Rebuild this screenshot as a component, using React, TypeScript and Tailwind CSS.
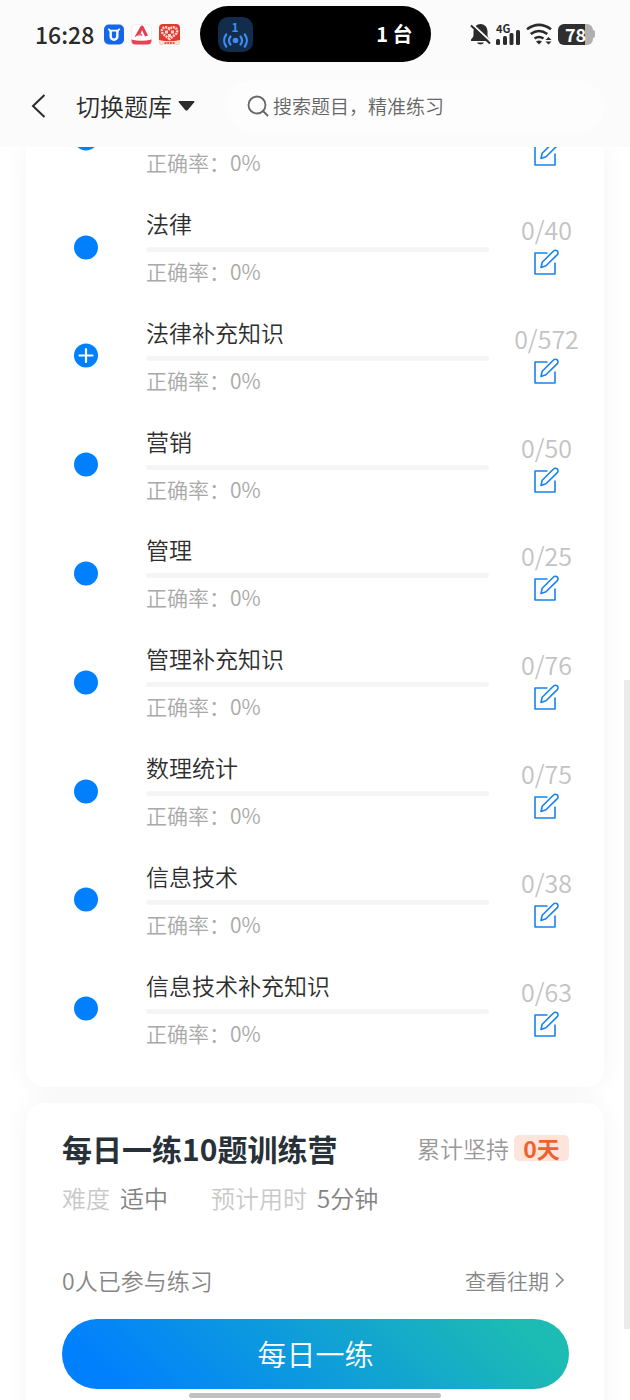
type Subject = { id: number; name?: string; total?: number; expandable?: boolean };

const subjects: Subject[] = [
  { id: 1 },
  { id: 2, name: "法律", total: 40 },
  { id: 3, name: "法律补充知识", total: 572, expandable: true },
  { id: 4, name: "营销", total: 50 },
  { id: 5, name: "管理", total: 25 },
  { id: 6, name: "管理补充知识", total: 76 },
  { id: 7, name: "数理统计", total: 75 },
  { id: 8, name: "信息技术", total: 38 },
  { id: 9, name: "信息技术补充知识", total: 63 },
];

function StatusBar() {
  return (
    <div className="flex h-[68px] items-center pl-[35px] pr-[35px]">
      <div className="flex flex-1 items-center gap-[10px]">
        <span className="text-[23px] font-medium leading-none text-[#2b2b2b]">16:28</span>
        <div className="flex gap-[7px]">
          <svg width="20" height="21" viewBox="0 0 21 21">
            <rect width="21" height="21" rx="5" fill="#1467ea" />
            <path d="M4.500 4.500 6.500 6.500h8L16.500 4.500" fill="none" stroke="#fff" strokeWidth="1.800" />
            <path d="M7 6v6.500a3.500 3.500 0 0 0 7 0V6" fill="none" stroke="#fff" strokeWidth="2.500" />
          </svg>
          <svg width="21" height="21" viewBox="0 0 21 21">
            <rect x=".5" y=".5" width="20" height="20" rx="4" fill="#fff" stroke="#f1eeee" />
            <path d="M3.500 13 9.500 2.500q1.500-2 3 0l4.500 9-3 1-3-6.500-1.500 4z" fill="#e63c50" />
            <path d="M3.500 13.500C6 9.500 9 9 11.500 10.500l-.5 1.500C8 11 6 11.500 3.500 13.500z" fill="#f0606f" />
            <path d="M.5 15.500Q10.500 18 20.500 15.500V17a4 4 0 0 1-4 3.500h-12a4 4 0 0 1-4-3.500z" fill="#ea4157" />
          </svg>
          <svg width="21" height="21" viewBox="0 0 21 21">
            <rect width="21" height="21" rx="4" fill="#e33a30" />
            <path
              d="M10.500 15 4 10C.5 5 6 .8 10.500 5c4.500-4.200 10 0 6.500 5z"
              fill="none"
              stroke="#fbd9d0"
              strokeWidth="2.500"
              strokeDasharray="2 .8"
            />
            <path d="M6 6.500h3v3H6zM12 6.500h3v3h-3zM9 10h3v3H9z" fill="#fbd9d0" />
            <path d="M0 16q10.500 2.500 21 0v1a4 4 0 0 1-4 4H4a4 4 0 0 1-4-4z" fill="#fce3d6" />
            <path d="M5.500 19h10" stroke="#e2574a" strokeWidth="2" strokeDasharray="2 .7" />
          </svg>
        </div>
      </div>

      <div className="flex h-14 w-[231px] items-center justify-between rounded-full bg-black pl-[18px] pr-[18px] text-white">
        <div className="flex h-[35px] w-[35px] flex-col items-center rounded-[10px] bg-[#122c4b] pt-1">
          <span className="text-[12px] font-bold leading-[12px] text-[#3e8cf4]">1</span>
          <svg width="27" height="16" viewBox="0 0 27 16" fill="none" stroke="#3e8cf4" strokeWidth="2.200" strokeLinecap="round">
            <circle cx="13.500" cy="7.500" r="2.800" fill="#3e8cf4" stroke="none" />
            <path d="M8.500 3.500a6.500 6.500 0 0 0 0 8M18.500 3.500a6.500 6.500 0 0 1 0 8M4.200 1.500a10 10 0 0 0 0 12M22.800 1.500a10 10 0 0 1 0 12" />
          </svg>
        </div>
        <span className="text-[20px] font-bold leading-none">1 台</span>
      </div>

      <div className="flex flex-1 items-center justify-end gap-[5px] text-[#2b2b2b]">
        <svg width="21" height="22" viewBox="0 0 21 22">
          <path
            d="M10.500 1a7 7 0 0 1 7 7v4.500q0 1.500 2.500 4V18H1v-1.500q2.500-2.500 2.500-4V8a7 7 0 0 1 7-7z"
            fill="currentColor"
          />
          <path d="M7 19.500h7q-1 2-3.500 2t-3.500-2z" fill="currentColor" />
          <path d="M2 1 21 18.500" stroke="#fbfbfb" strokeWidth="2" />
          <path d="M1 2.500 20 20.500" stroke="currentColor" strokeWidth="2" />
        </svg>
        <div className="relative">
          <svg width="25" height="22" viewBox="0 0 25 22" fill="currentColor">
            <rect x="0" y="16" width="4" height="6" rx="1.500" />
            <rect x="7" y="13" width="4" height="9" rx="1.500" />
            <rect x="13.500" y="10" width="4" height="12" rx="1.500" />
            <rect x="20" y="7" width="4" height="15" rx="1.500" />
          </svg>
          <span className="absolute left-0 top-0 text-[11px] font-bold leading-[10px]">4G</span>
        </div>
        <svg width="27" height="22" viewBox="0 0 27 22">
          <path
            d="M1 6.200q12-8.500 24 0M4.700 11q8.300-6 16.600 0M8.500 15.500q4.500-3 9 0"
            fill="none"
            stroke="currentColor"
            strokeWidth="2.600"
          />
          <path d="M10 18.500q3-2 6 0l-3 3z" fill="currentColor" />
          <path d="m19.500 17 3-3 3 3zM19.500 18.500l3 3 3-3z" fill="currentColor" />
        </svg>
        <div className="flex items-center">
          <div className="flex h-[21px] w-[35px] items-center justify-center rounded-[6px] bg-[linear-gradient(90deg,#2f2f2f_77%,#b0b0b0_77%)] text-[18px] font-bold leading-none text-white">
            78
          </div>
          <div className="h-2 w-[2px] rounded-r bg-[#b0b0b0]" />
        </div>
      </div>
    </div>
  );
}

function EditIcon() {
  return (
    <svg width="27" height="27" viewBox="0 0 27 27" fill="none" stroke="#1683ee" strokeWidth="1.600" strokeLinejoin="round">
      <path d="M14.500 4H2v21h20V13.500" />
      <path d="m8 18.500 1.200-5.200L20.500 2a2.500 2.500 0 0 1 3.800 3.600L13 16.800z" />
    </svg>
  );
}

function SubjectRow({ name, total, expandable }: Subject) {
  return (
    <li className="flex items-center">
      <div className="flex w-[120px] shrink-0 justify-center">
        <svg width="25" height="25" viewBox="0 0 25 25">
          <circle cx="12" cy="12.500" r="12" fill="#0180fe" />
          {expandable && <path d="M12 6v13M5.500 12.500h13" stroke="#fff" strokeWidth="2.200" strokeLinecap="round" />}
        </svg>
      </div>
      <div className="min-w-0 flex-1">
        <h3 className="h-8 text-[23px] leading-8 text-[#2e2e2e]">{name}</h3>
        <div className="mt-2 h-[5px] rounded-full bg-[#f5f5f5]" />
        <p className="mt-[3px] text-[21px] leading-8 text-[#a9a9a9]">正确率：0%</p>
      </div>
      <div className="flex w-[115px] shrink-0 flex-col items-center gap-1 pb-[5px]">
        <span className="h-8 text-[25px] leading-8 text-[#c3c3c3]">{total && `0/${total}`}</span>
        <button aria-label={`练习${name ?? ""}`}>
          <EditIcon />
        </button>
      </div>
    </li>
  );
}

export default function App() {
  return (
    <div className="relative flex h-screen flex-col overflow-hidden bg-white font-['Noto_Sans_CJK_SC',sans-serif] font-[350]">
      <header className="shrink-0 bg-[#fbfbfb] pb-[15px]">
        <StatusBar />
        <div className="flex items-center pl-[31px] pr-[26px] pt-3">
          <button aria-label="返回">
            <svg width="15" height="24" viewBox="0 0 15 24" fill="none" stroke="#2b2b2b" strokeWidth="2">
              <path d="M13.500 1 2 12l11.500 11" />
            </svg>
          </button>
          <button className="ml-[30px] flex items-center gap-[6px] text-[24px] leading-8 text-[#2b2b2b]">
            切换题库
            <svg width="17" height="10" viewBox="0 0 17 10">
              <path d="M1.500 0h14q1.500 0 .7 1.200L9.800 9q-1.300 1-2.600 0L.8 1.200Q0 0 1.500 0z" fill="currentColor" />
            </svg>
          </button>
          <label className="ml-8 flex h-[52px] min-w-0 flex-1 items-center gap-1 rounded-full bg-[#fdfdfd] pl-5">
            <svg width="22" height="22" viewBox="0 0 22 22" fill="none" stroke="#666" strokeWidth="1.800">
              <circle cx="10" cy="10" r="8.500" />
              <path d="m16 16 4.500 4.500" strokeLinecap="round" />
            </svg>
            <input
              type="search"
              aria-label="搜索题目"
              placeholder="搜索题目，精准练习"
              className="min-w-0 flex-1 bg-transparent text-[19px] leading-7 outline-none placeholder:text-[#666]"
            />
          </label>
        </div>
      </header>

      <main className="flex min-h-0 flex-1 flex-col gap-4 overflow-hidden px-[26px]">
        <section className="shrink-0 rounded-b-[18px] bg-white pb-6 shadow-[0_0_24px_rgba(0,0,0,0.05)]">
          <ul className="-mt-[63px] grid h-[979px] auto-rows-fr">
            {subjects.map((subject) => (
              <SubjectRow key={subject.id} {...subject} />
            ))}
          </ul>
        </section>

        <section className="shrink-0 rounded-t-[18px] bg-white pb-20 pl-9 pr-[35px] pt-[23px] shadow-[0_0_24px_rgba(0,0,0,0.05)]">
          <div className="flex items-center justify-between">
            <h2 className="text-[30px] font-bold leading-[44px] text-[#283138]">每日一练10题训练营</h2>
            <p className="flex items-center gap-[5px] text-[23px] leading-8 text-[#999]">
              累计坚持
              <span className="flex h-[26px] w-[55px] items-center justify-center rounded-[5px] bg-[#fee5db] font-bold text-[#f0622d]">
                0天
              </span>
            </p>
          </div>
          <div className="mt-3 flex gap-[43px] text-[24px] leading-8 text-[#828282]">
            <p className="flex gap-[10px]">
              <span className="text-[#c9c9c9]">难度</span>适中
            </p>
            <p className="flex gap-[10px]">
              <span className="text-[#c9c9c9]">预计用时</span>5分钟
            </p>
          </div>
          <div className="mt-[50px] flex items-center justify-between leading-8 text-[#868686]">
            <p className="text-[23px]">0人已参与练习</p>
            <a href="#history" className="flex items-center gap-[5px] pr-1 text-[21px]">
              查看往期
              <svg width="11" height="16" viewBox="0 0 11 16" fill="none" stroke="currentColor" strokeWidth="1.500">
                <path d="m2 1 7 7-7 7" />
              </svg>
            </a>
          </div>
          <button className="mt-[23px] h-[70px] w-full rounded-full bg-[linear-gradient(45deg,#0180fe_10%,#1cbbb4_90%)] text-[29px] text-white">
            每日一练
          </button>
        </section>
      </main>

      {/* scroll thumb */}
      <div className="absolute right-0 top-[680px] h-[649px] w-[6px] bg-[#ebebeb]" />
      {/* home indicator */}
      <div className="absolute bottom-[2px] left-[30%] right-[30%] h-[5px] rounded-full bg-[#c1c1c1]" />
    </div>
  );
}
